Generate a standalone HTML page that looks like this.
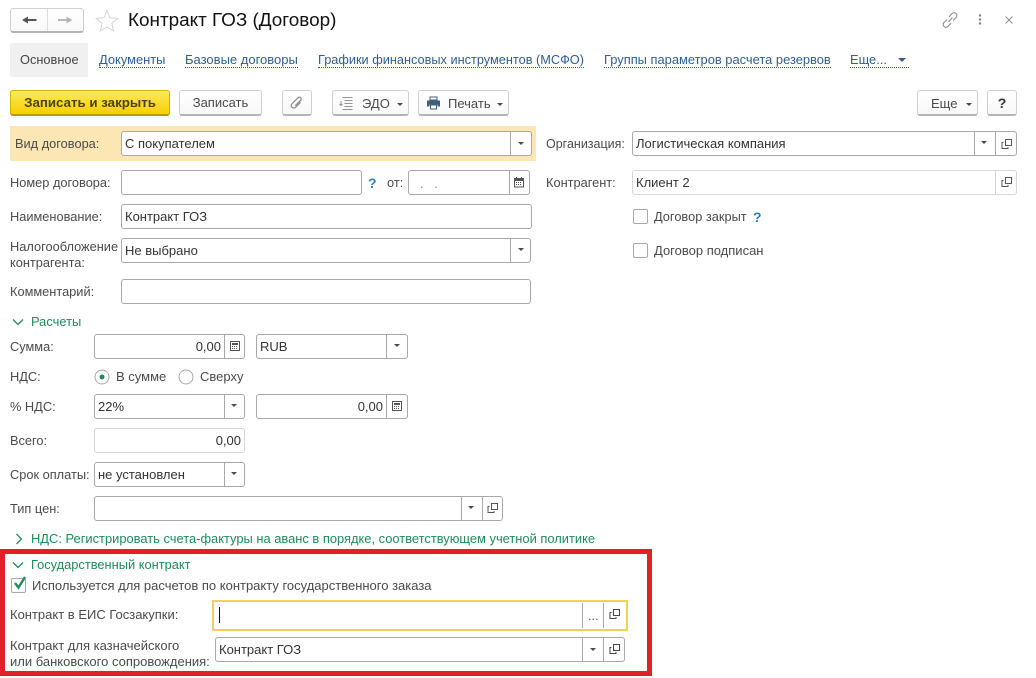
<!DOCTYPE html>
<html lang="ru"><head><meta charset="utf-8"><title>Контракт ГОЗ (Договор)</title>
<style>
html,body{margin:0;padding:0;background:#fff}
#p{position:relative;width:1036px;height:678px;overflow:hidden;background:#fff;font-family:"Liberation Sans",sans-serif;font-size:13px;color:#4a4a4a;filter:blur(.3px)}
#p>*{position:absolute}
.t{white-space:nowrap;line-height:14px;font-size:12.8px}
.v,.w{font-size:13px}
.v{color:#333}
.f{box-sizing:border-box;background:#fff;border:1px solid #a8a8a8;border-radius:3px;height:25px}
.lt{border-color:#d6d6d6}
.d{width:1px;background:#a8a8a8}
.dl{background:#d6d6d6}
.b{box-sizing:border-box;height:26px;border:1px solid #cfcfcf;border-bottom:2px solid #b4b4b4;border-radius:3px;background:linear-gradient(#fff,#f8f8f8);color:#4a4a4a;text-align:center;line-height:24px}
.a{width:0;height:0;border-left:3px solid transparent;border-right:3px solid transparent;border-top:3px solid #4a4a4a}
.l{color:#2f5d94;border-bottom:1px dotted #2f5d94;line-height:14px;white-space:nowrap;font-size:12.9px}
.g{color:#1f8a5a;white-space:nowrap;line-height:14px;font-size:12.9px}
.q{color:#2f7fa8;font-weight:bold;font-size:14px;line-height:14px}
.c{box-sizing:border-box;width:15px;height:15px;border:1px solid #a8a8a8;border-radius:2px;background:#fff}
</style></head><body><div id="p">

<div class="b" style="left:10px;top:8px;width:74px;height:25px"></div>
<div style="left:47px;top:9px;width:1px;height:22px;background:#ddd"></div>
<svg style="left:22px;top:15px" width="15" height="10" viewBox="0 0 15 10"><path d="M0 5L6 1.500V4h8.500v2H6v2.500z" fill="#555"/></svg>
<svg style="left:58px;top:15px" width="15" height="10" viewBox="0 0 15 10"><path d="M14.500 5L8.500 1.500V4H0v2h8.500v2.500z" fill="#b8b8b8"/></svg>
<svg style="left:95px;top:9px" width="24" height="23" viewBox="0 0 24 23"><path d="M12 1.500l3 7.300 7.800.6-6 5 1.900 7.600L12 17.900l-6.700 4.100 1.900-7.600-6-5 7.800-.6z" fill="#fff" stroke="#d4d4d4" stroke-width="1"/></svg>
<div class="t" style="left:128px;top:11px;font-size:18.9px;line-height:20px;color:#111">Контракт ГОЗ (Договор)</div>

<svg style="left:941px;top:11px" width="18" height="18" viewBox="0 0 18 18" fill="none" stroke="#8a8a8a" stroke-width="1"><path d="M7.500 11L11.500 6.500M8 6l3-3.500c1.200-1.200 3-1.200 4 0s1 2.800 0 4l-3 3M10 12l-3 3.500c-1.200 1.200-3 1.200-4 0s-1-2.800 0-4l3-3"/></svg>
<svg style="left:978px;top:13px" width="4" height="14" viewBox="0 0 4 14"><circle cx="2" cy="2.500" r="1.200" fill="#808080"/><circle cx="2" cy="6.500" r="1.200" fill="#808080"/><circle cx="2" cy="10.500" r="1.200" fill="#808080"/></svg>
<svg style="left:1004px;top:15px" width="10" height="10" viewBox="0 0 10 10"><path d="M1.500 1.500l7 7M8.500 1.500l-7 7" stroke="#8a8a8a" stroke-width=".9" fill="none"/></svg>

<div style="left:10px;top:43px;width:78px;height:34px;background:#f0f0f0;border-radius:2px"></div>
<div class="t" style="left:20px;top:53px;color:#444">Основное</div>
<div class="l" style="left:99px;top:53px">Документы</div>
<div class="l" style="left:185px;top:53px;font-size:13px">Базовые договоры</div>
<div class="l" style="left:318px;top:53px;font-size:12.75px">Графики финансовых инструментов (МСФО)</div>
<div class="l" style="left:604px;top:53px">Группы параметров расчета резервов</div>
<div class="l" style="left:850px;top:53px;width:59px">Еще...</div>
<div class="a" style="left:898px;top:58px;border-left-width:4px;border-right-width:4px;border-top:4px solid #2f5d94"></div>

<div class="b" style="left:10px;top:90px;width:160px;border:1px solid #d0b000;border-bottom:2px solid #b79a00;background:linear-gradient(#ffe95c,#f6cf00);color:#4a4300;font-weight:bold;font-size:13.3px">Записать и закрыть</div>
<div class="b" style="left:179px;top:90px;width:83px">Записать</div>
<div class="b" style="left:282px;top:90px;width:30px"></div>
<svg style="left:289px;top:95px" width="16" height="16" viewBox="0 0 16 16" fill="none" stroke="#8f8f8f" stroke-width="1.300"><g transform="rotate(45 8 8)"><path d="M10 5v7a2.500 2.500 0 0 1-5 0V3.500a1.800 1.800 0 0 1 3.600 0V11"/></g></svg>
<div class="b" style="left:332px;top:90px;width:77px"></div>
<svg style="left:339px;top:96px" width="15" height="15" viewBox="0 0 15 15" fill="none" stroke="#949494" stroke-width="1"><path d="M3.500 1.500h10M5.500 4.500h8M5.500 7.500h8M5.500 10.500h8M3.500 13.500h10M2 5v4.500M.5 8L2 9.500 3.500 8"/></svg>
<div class="t w" style="left:362px;top:97px">ЭДО</div>
<div class="a" style="left:397px;top:103px"></div>
<div class="b" style="left:418px;top:90px;width:91px"></div>
<svg style="left:426px;top:96px" width="15" height="14" viewBox="0 0 15 14"><path d="M4 1h7v3H4z" fill="#fff" stroke="#3f5f7a"/><path d="M1 4.500h13v6h-2.500v-2h-8v2H1z" fill="#3f5f7a"/><path d="M4.500 9h6v4h-6z" fill="#fff" stroke="#3f5f7a"/></svg>
<div class="t w" style="left:448px;top:97px">Печать</div>
<div class="a" style="left:497px;top:103px"></div>
<div class="b" style="left:917px;top:90px;width:61px"></div>
<div class="t w" style="left:931px;top:97px">Еще</div>
<div class="a" style="left:966px;top:103px"></div>
<div class="b" style="left:987px;top:90px;width:30px;font-weight:bold;font-size:14px;color:#333">?</div>

<div style="left:10px;top:126px;width:526px;height:35px;background:#fbe6b4"></div>
<div class="t" style="left:15px;top:137px">Вид договора:</div>
<div class="f" style="left:121px;top:131px;width:411px"></div>
<div class="d" style="left:510px;top:132px;height:23px"></div>
<div class="a" style="left:518px;top:142px"></div>
<div class="t v" style="left:125px;top:137px">С покупателем</div>

<div class="t" style="left:10px;top:176px">Номер договора:</div>
<div class="f" style="left:121px;top:170px;width:241px"></div>
<div class="q" style="left:368px;top:176px">?</div>
<div class="t" style="left:387px;top:176px">от:</div>
<div class="f" style="left:408px;top:170px;width:122px"></div>
<div class="d" style="left:509px;top:171px;height:23px"></div>
<div class="t" style="left:420px;top:177px;color:#888">.&nbsp;&nbsp;&nbsp;.</div>
<svg style="left:513px;top:176px" width="12" height="12" viewBox="0 0 12 12"><path d="M1.500 2.500h9v8.500h-9z" fill="#fff" stroke="#555"/><path d="M1.500 2.500h9v2.500h-9zM3 1h1v2H3zM8 1h1v2H8z" fill="#555"/><path d="M3 6.500h6M3 8.500h6" stroke="#555" stroke-dasharray="1 1"/></svg>

<div class="t" style="left:10px;top:210px">Наименование:</div>
<div class="f" style="left:121px;top:204px;width:411px"></div>
<div class="t v" style="left:125px;top:210px">Контракт ГОЗ</div>

<div class="t" style="left:10px;top:239px;line-height:16px">Налогообложение<br>контрагента:</div>
<div class="f" style="left:121px;top:238px;width:410px"></div>
<div class="d" style="left:510px;top:239px;height:23px"></div>
<div class="a" style="left:518px;top:248px"></div>
<div class="t v" style="left:125px;top:244px">Не выбрано</div>

<div class="t" style="left:10px;top:285px">Комментарий:</div>
<div class="f" style="left:121px;top:279px;width:410px"></div>

<div class="t" style="left:546px;top:137px;font-size:12.5px">Организация:</div>
<div class="f" style="left:632px;top:131px;width:385px"></div>
<div class="d" style="left:974px;top:132px;height:23px"></div>
<div class="d" style="left:995px;top:132px;height:23px"></div>
<div class="a" style="left:981px;top:141px"></div>
<svg style="left:1001px;top:138px" width="12" height="12" viewBox="0 0 12 12" fill="none" stroke="#555"><path d="M4.500 1.500h6v6h-6zM2.500 4.500h-1.500v6h6V9"/></svg>
<div class="t v" style="left:636px;top:137px">Логистическая компания</div>

<div class="t" style="left:546px;top:176px">Контрагент:</div>
<div class="f lt" style="left:632px;top:170px;width:385px"></div>
<div class="d dl" style="left:995px;top:171px;height:23px"></div>
<svg style="left:1001px;top:176px" width="12" height="12" viewBox="0 0 12 12" fill="none" stroke="#555"><path d="M4.500 1.500h6v6h-6zM2.500 4.500h-1.500v6h6V9"/></svg>
<div class="t v" style="left:636px;top:176px">Клиент 2</div>

<div class="c" style="left:633px;top:209px"></div>
<div class="t" style="left:654px;top:210px">Договор закрыт</div>
<div class="q" style="left:753px;top:210px">?</div>
<div class="c" style="left:633px;top:243px"></div>
<div class="t w" style="left:654px;top:244px">Договор подписан</div>

<svg style="left:12px;top:318px" width="12" height="8" viewBox="0 0 12 8" fill="none" stroke="#1f8a5a" stroke-width="1.300"><path d="M1 1.500l5 5 5-5"/></svg>
<div class="g" style="left:31px;top:315px">Расчеты</div>

<div class="t" style="left:10px;top:340px">Сумма:</div>
<div class="f" style="left:94px;top:334px;width:151px"></div>
<div class="d" style="left:224px;top:335px;height:23px"></div>
<div class="t v" style="left:94px;top:340px;width:127px;text-align:right">0,00</div>
<svg style="left:229px;top:340px" width="12" height="12" viewBox="0 0 12 12"><path d="M1.500 1.500h9v9h-9z" fill="#fff" stroke="#555"/><path d="M3 3h6v2H3z" fill="#555"/><path d="M3 6.500h6M3 8.500h6" stroke="#555" stroke-dasharray="1 1"/></svg>
<div class="f" style="left:256px;top:334px;width:152px"></div>
<div class="d" style="left:386px;top:335px;height:23px"></div>
<div class="a" style="left:394px;top:344px"></div>
<div class="t v" style="left:260px;top:340px">RUB</div>

<div class="t" style="left:10px;top:370px">НДС:</div>
<svg style="left:94px;top:369px" width="16" height="16" viewBox="0 0 16 16"><circle cx="8" cy="8" r="7" fill="#fff" stroke="#a8a8a8"/><circle cx="8" cy="8" r="2.500" fill="#1f8a5a"/></svg>
<div class="t w" style="left:116px;top:370px">В сумме</div>
<svg style="left:178px;top:369px" width="16" height="16" viewBox="0 0 16 16"><circle cx="8" cy="8" r="7" fill="#fff" stroke="#a8a8a8"/></svg>
<div class="t w" style="left:200px;top:370px">Сверху</div>

<div class="t" style="left:10px;top:400px">% НДС:</div>
<div class="f" style="left:94px;top:394px;width:151px"></div>
<div class="d" style="left:224px;top:395px;height:23px"></div>
<div class="a" style="left:231px;top:404px"></div>
<div class="t v" style="left:98px;top:400px">22%</div>
<div class="f" style="left:256px;top:394px;width:152px"></div>
<div class="d" style="left:386px;top:395px;height:23px"></div>
<div class="t v" style="left:256px;top:400px;width:127px;text-align:right">0,00</div>
<svg style="left:391px;top:400px" width="12" height="12" viewBox="0 0 12 12"><path d="M1.500 1.500h9v9h-9z" fill="#fff" stroke="#555"/><path d="M3 3h6v2H3z" fill="#555"/><path d="M3 6.500h6M3 8.500h6" stroke="#555" stroke-dasharray="1 1"/></svg>

<div class="t" style="left:10px;top:434px">Всего:</div>
<div class="f lt" style="left:94px;top:428px;width:151px"></div>
<div class="t v" style="left:94px;top:434px;width:147px;text-align:right">0,00</div>

<div class="t" style="left:10px;top:468px">Срок оплаты:</div>
<div class="f" style="left:94px;top:462px;width:151px"></div>
<div class="d" style="left:224px;top:463px;height:23px"></div>
<div class="a" style="left:231px;top:472px"></div>
<div class="t v" style="left:98px;top:468px">не установлен</div>

<div class="t" style="left:10px;top:502px">Тип цен:</div>
<div class="f" style="left:94px;top:496px;width:409px"></div>
<div class="d" style="left:461px;top:497px;height:23px"></div>
<div class="d" style="left:482px;top:497px;height:23px"></div>
<div class="a" style="left:468px;top:506px"></div>
<svg style="left:487px;top:502px" width="12" height="12" viewBox="0 0 12 12" fill="none" stroke="#555"><path d="M4.500 1.500h6v6h-6zM2.500 4.500h-1.500v6h6V9"/></svg>

<svg style="left:15px;top:533px" width="8" height="12" viewBox="0 0 8 12" fill="none" stroke="#1f8a5a" stroke-width="1.300"><path d="M1.500 1l5 5-5 5"/></svg>
<div class="g" style="left:31px;top:532px">НДС: Регистрировать счета-фактуры на аванс в порядке, соответствующем учетной политике</div>

<div style="left:0;top:549px;width:652px;height:127px;box-sizing:border-box;border:5px solid #e2202c"></div>
<svg style="left:12px;top:561px" width="12" height="8" viewBox="0 0 12 8" fill="none" stroke="#1f8a5a" stroke-width="1.300"><path d="M1 1.500l5 5 5-5"/></svg>
<div class="g" style="left:31px;top:558px;font-size:12.85px">Государственный контракт</div>
<div class="c" style="left:11px;top:578px"></div>
<svg style="left:12px;top:575px" width="16" height="16" viewBox="0 0 16 16" fill="none" stroke="#1f8a5a" stroke-width="2.400"><path d="M3 8l3.500 4.500L13 2"/></svg>
<div class="t w" style="left:32px;top:579px">Используется для расчетов по контракту государственного заказа</div>

<div class="t w" style="left:10px;top:608px">Контракт в ЕИС Госзакупки:</div>
<div style="left:212px;top:600px;width:416px;height:31px;box-sizing:border-box;border:2px solid #edd25c;background:#fff"></div>
<div style="left:219px;top:607px;width:1px;height:16px;background:#111"></div>
<div class="d" style="left:582px;top:603px;height:25px"></div>
<div class="d" style="left:603px;top:603px;height:25px"></div>
<div class="t" style="left:588px;top:609px;color:#555">...</div>
<svg style="left:609px;top:608px" width="12" height="12" viewBox="0 0 12 12" fill="none" stroke="#444"><path d="M4.500 1.500h6v6h-6zM2.500 4.500h-1.500v6h6V9"/></svg>

<div class="t w" style="left:10px;top:638px;line-height:16px">Контракт для казначейского<br>или банковского сопровождения:</div>
<div class="f" style="left:215px;top:637px;width:410px"></div>
<div class="d" style="left:582px;top:638px;height:23px"></div>
<div class="d" style="left:603px;top:638px;height:23px"></div>
<div class="a" style="left:590px;top:648px"></div>
<svg style="left:609px;top:643px" width="12" height="12" viewBox="0 0 12 12" fill="none" stroke="#444"><path d="M4.500 1.500h6v6h-6zM2.500 4.500h-1.500v6h6V9"/></svg>
<div class="t v" style="left:219px;top:643px">Контракт ГОЗ</div>

</div></body></html>
